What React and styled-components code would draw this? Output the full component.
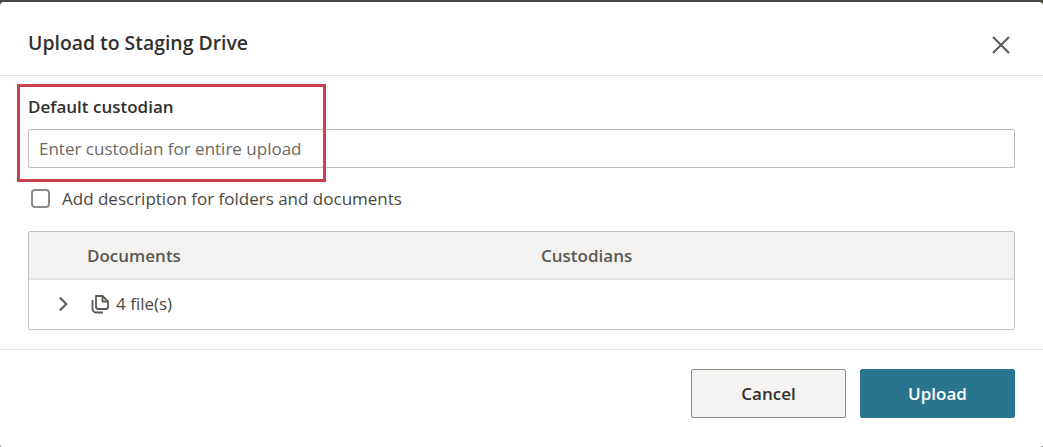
import React from 'react';
import styled, { createGlobalStyle } from 'styled-components';

const GlobalStyle = createGlobalStyle`
  html, body {
    margin: 0;
    padding: 0;
    background: #4a4a45;
  }
  * {
    box-sizing: border-box;
  }
`;

const Dialog = styled.div`
  position: relative;
  width: 1043px;
  height: 445px;
  margin-top: 2px;
  background: #fff;
  border-radius: 4px 4px 2px 2px;
  font-family: "Open Sans", "Noto Sans", sans-serif;
  color: #32302c;
  overflow: hidden;
`;

const Header = styled.div`
  display: flex;
  align-items: center;
  justify-content: space-between;
  height: 74px;
  padding: 8px 33px 0 28px;
  border-bottom: 1px solid #e4e3e1;
`;

const Title = styled.h2`
  margin: 0;
  font-size: 19.4px;
  font-weight: 600;
  line-height: 24px;
`;

const CloseButton = styled.button`
  display: flex;
  margin-top: 4px;
  padding: 0;
  border: 0;
  background: none;
  color: #5a5853;
`;

const Body = styled.div`
  height: 274px;
  padding: 19px 28px 0;
  border-bottom: 1px solid #e4e3e1;
`;

const Label = styled.label`
  display: block;
  height: 34px;
  font-size: 17px;
  font-weight: 600;
  line-height: 24px;
`;

const TextInput = styled.input`
  display: block;
  width: 987px;
  height: 39px;
  padding: 0 10px;
  border: 1px solid #bdbbb7;
  border-radius: 2px;
  font-family: inherit;
  font-size: 17px;
  color: #32302c;
  outline: none;

  &::placeholder {
    color: #6b6963;
    opacity: 1;
  }
`;

const CheckRow = styled.label`
  display: flex;
  align-items: center;
  gap: 12px;
  height: 20px;
  margin: 20px 0 23px 3px;
  font-size: 17px;
  color: #4a4843;
`;

const CheckBox = styled.span`
  width: 19px;
  height: 19px;
  margin-top: 1px;
  border: 2px solid #8c8a85;
  border-radius: 4px;
  background: #fff;
`;

const Table = styled.div`
  width: 987px;
  height: 99px;
  border: 1px solid #c4c2be;
  border-radius: 2px;
`;

const HeadRow = styled.div`
  display: grid;
  grid-template-columns: 454px 1fr;
  align-items: center;
  height: 48px;
  padding-left: 58px;
  background: #f3f2f0;
  border-bottom: 2px solid #e4e3e1;
  font-size: 17px;
  font-weight: 600;
  color: #5a5853;
`;

const FileRow = styled.div`
  display: flex;
  align-items: center;
  height: 47px;
  padding-left: 27px;
  font-size: 17px;
  color: #4a4843;
`;

const Chevron = styled.svg`
  width: 16px;
  height: 16px;
  margin-right: 18px;
`;

const FilesIcon = styled.svg`
  width: 20px;
  height: 20px;
  margin-right: 6px;
`;

const Footer = styled.div`
  display: flex;
  justify-content: flex-end;
  gap: 14px;
  padding: 19px 28px 0;
`;

const Button = styled.button`
  width: 155px;
  height: 49px;
  border: 1px solid ${(p) => (p.$primary ? '#2a758e' : '#8f8d88')};
  border-radius: 2px;
  background: ${(p) => (p.$primary ? '#2a758e' : '#f4f3f1')};
  color: ${(p) => (p.$primary ? '#fff' : '#32302c')};
  font-family: inherit;
  font-size: 17px;
  font-weight: 600;
`;

const Highlight = styled.div`
  position: absolute;
  left: 17px;
  top: 82px;
  width: 309px;
  height: 98px;
  border: 3px solid #c8414f;
  pointer-events: none;
`;

export default function App() {
  return (
    <>
      <GlobalStyle />
      <Dialog>
        <Header>
          <Title>Upload to Staging Drive</Title>
          <CloseButton aria-label="Close">
            <svg width="18" height="18" viewBox="0 0 18 18" fill="none" stroke="currentColor" strokeWidth="2">
              <path d="M1 1l16 16M17 1L1 17" />
            </svg>
          </CloseButton>
        </Header>
        <Body>
          <Label>Default custodian</Label>
          <TextInput placeholder="Enter custodian for entire upload" />
          <CheckRow>
            <CheckBox />
            Add description for folders and documents
          </CheckRow>
          <Table>
            <HeadRow>
              <span>Documents</span>
              <span>Custodians</span>
            </HeadRow>
            <FileRow>
              <Chevron viewBox="0 0 16 16" fill="none" stroke="#5a5853" strokeWidth="2">
                <path d="M3.8 1.5l6.5 6.5-6.5 6.5" />
              </Chevron>
              <FilesIcon viewBox="0 0 20 20" fill="none" stroke="#5a5853" strokeWidth="1.8" strokeLinejoin="round">
                <path d="M6 2h6.5L18 7.5V13a2 2 0 0 1-2 2H8a2 2 0 0 1-2-2z" />
                <path d="M12.5 2v5.5H18" />
                <path d="M2.5 6v9a3.5 3.5 0 0 0 3.5 3.5h7" />
              </FilesIcon>
              4 file(s)
            </FileRow>
          </Table>
        </Body>
        <Footer>
          <Button>Cancel</Button>
          <Button $primary>Upload</Button>
        </Footer>
        <Highlight />
      </Dialog>
    </>
  );
}
